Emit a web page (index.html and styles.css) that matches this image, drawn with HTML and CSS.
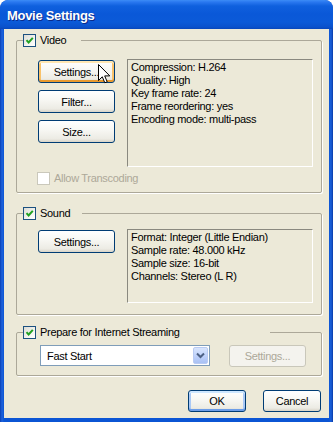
FILE: index.html
```html
<!DOCTYPE html>
<html>
<head>
<meta charset="utf-8">
<link rel="stylesheet" href="styles.css">
</head>
<body>
<div class="window">
  <div class="titlebar"><span class="title">Movie Settings</span></div>
  <div class="client">
    <fieldset class="group g-video">
      <legend class="glabel lg-video"><span class="chk"><svg viewBox="0 0 11 11" width="11" height="11"><path d="M2.5 5.2 L4.6 7.5 L8.8 2.8" fill="none" stroke="#21a121" stroke-width="2"/></svg></span>Video</legend>
      <div class="gbody b-video">
        <div class="row">
          <div class="btncol">
            <button class="btn wide hover">Settings...</button>
            <button class="btn wide">Filter...</button>
            <button class="btn wide">Size...</button>
          </div>
          <div class="info i-video">
            <div>Compression: H.264</div>
            <div>Quality: High</div>
            <div>Key frame rate: 24</div>
            <div>Frame reordering: yes</div>
            <div>Encoding mode: multi-pass</div>
          </div>
        </div>
        <div class="opt disabled"><span class="chk dis"></span>Allow Transcoding</div>
      </div>
    </fieldset>

    <fieldset class="group g-sound">
      <legend class="glabel lg-sound"><span class="chk"><svg viewBox="0 0 11 11" width="11" height="11"><path d="M2.5 5.2 L4.6 7.5 L8.8 2.8" fill="none" stroke="#21a121" stroke-width="2"/></svg></span>Sound</legend>
      <div class="gbody b-sound">
        <div class="row">
          <div class="btncol">
            <button class="btn wide">Settings...</button>
          </div>
          <div class="info i-sound">
            <div>Format: Integer (Little Endian)</div>
            <div>Sample rate: 48.000 kHz</div>
            <div>Sample size: 16-bit</div>
            <div>Channels: Stereo (L R)</div>
          </div>
        </div>
      </div>
    </fieldset>

    <fieldset class="group g-net">
      <legend class="glabel lg-net"><span class="chk"><svg viewBox="0 0 11 11" width="11" height="11"><path d="M2.5 5.2 L4.6 7.5 L8.8 2.8" fill="none" stroke="#21a121" stroke-width="2"/></svg></span>Prepare for Internet Streaming</legend>
      <div class="gbody b-net">
        <div class="combo">
          <span class="combo-text">Fast Start</span>
          <span class="combo-btn"><svg viewBox="0 0 9 7" width="9" height="7"><path d="M1 1.5 L4.5 5 L8 1.5" fill="none" stroke="#4d6185" stroke-width="2"/></svg></span>
        </div>
        <button class="btn wide disabled-btn">Settings...</button>
      </div>
    </fieldset>

    <div class="footer">
      <button class="btn small default">OK</button>
      <button class="btn small">Cancel</button>
    </div>
  </div>
  <svg class="cursor" viewBox="0 0 13 21" width="13" height="21"><path d="M0.5 0.5 L0.5 16.5 L4.3 12.8 L6.8 18.8 L9.2 17.8 L6.7 11.9 L11.8 11.9 Z" fill="#fff" stroke="#000" stroke-width="1" stroke-linejoin="miter"/></svg>
</div>
</body>
</html>
```
FILE: styles.css
```css
html, body {
  margin: 0;
  padding: 0;
  background: #ffffff;
}
.window {
  position: relative;
  width: 333px;
  height: 422px;
  box-sizing: border-box;
  border-radius: 8px 8px 0 0;
  background: linear-gradient(90deg, #0a3fb4 0, #1e63dc 2px, #0b55d4 4px, #0b55d4 329px, #1b5fd8 331px, #083aa8 333px);
  display: flex;
  flex-direction: column;
  font-family: "Liberation Sans", Arial, sans-serif;
  font-size: 11px;
  letter-spacing: -0.3px;
  color: #000;
  overflow: hidden;
}
.titlebar {
  height: 29px;
  flex: none;
  box-sizing: border-box;
  padding: 8px 0 0 7px;
  border-radius: 8px 8px 0 0;
  background: linear-gradient(180deg, #3c8cf6 0, #2a78f0 2px, #0f60de 6px, #0a58d8 14px, #0b5ad8 22px, #0a52cc 27px, #0847ba 29px);
}
.title {
  display: block;
  font-family: "Liberation Sans", Arial, sans-serif;
  font-weight: bold;
  font-size: 13px;
  line-height: 16px;
  letter-spacing: -0.3px;
  color: #ffffff;
  text-shadow: 1px 1px 0 #0a2a8a;
}
.client {
  flex: 1;
  margin: 0 4px 4px 4px;
  background: #ece9d8;
  display: flex;
  flex-direction: column;
}
.group {
  margin: 0 7px 0 12px;
  padding: 0;
  border: 1px solid #aca899;
  border-radius: 2px;
  box-shadow: 1px 1px 0 #ffffff;
  min-width: 0;
}
.g-video { margin-top: 5px; }
.g-sound { margin-top: 14px; }
.g-net { margin-top: 11px; }
.glabel {
  display: flex;
  align-items: center;
  margin-left: 6px;
  padding: 0;
  height: 13px;
  line-height: 13px;
  background: #ece9d8;
}
.lg-video { padding-right: 15px; }
.lg-sound { padding-right: 12px; }
.lg-net { padding-right: 90px; }
.chk {
  width: 13px;
  height: 13px;
  box-sizing: border-box;
  border: 1px solid #1c5180;
  background: linear-gradient(135deg, #dcdcd5 0%, #f4f4f0 60%, #ffffff 100%);
  margin-right: 4px;
  display: inline-flex;
  align-items: center;
  justify-content: center;
  flex: none;
}
.chk.dis {
  border-color: #cac8bb;
  background: #ffffff;
}
.gbody { padding-left: 21px; }
.b-video { padding-top: 12px; padding-bottom: 7px; }
.b-sound { padding-top: 9px; padding-bottom: 11px; }
.b-net {
  padding-top: 6px;
  padding-bottom: 8px;
  padding-left: 23px;
  display: flex;
  gap: 19px;
}
.row {
  display: flex;
  gap: 12px;
}
.btncol {
  display: flex;
  flex-direction: column;
  gap: 7px;
  padding-top: 1px;
}
.btn {
  box-sizing: border-box;
  height: 23px;
  margin: 0;
  padding: 0;
  border: 1px solid #003c74;
  border-radius: 3px;
  background: linear-gradient(180deg, #ffffff 0%, #f8f8f4 40%, #ecebe4 85%, #d8d3c6 100%);
  font-family: "Liberation Sans", Arial, sans-serif;
  font-size: 11px;
  letter-spacing: -0.3px;
  color: #000;
  text-align: center;
}
.btn.wide { width: 77px; }
.btn.small { width: 58px; height: 22px; }
.btn.hover {
  box-shadow: inset 0 2px 0 #ffe7b3, inset 0 -2px 0 #e99a2f, inset 2px 0 0 #f9c26a, inset -2px 0 0 #f9c26a;
}
.btn.default {
  box-shadow: inset 0 2px 0 #cee7ff, inset 0 -2px 0 #6c9de8, inset 2px 0 0 #aac9f6, inset -2px 0 0 #aac9f6;
}
.btn.disabled-btn {
  height: 22px;
  border-color: #c9c7ba;
  background: #f4f3ee;
  color: #aca899;
}
.info {
  box-sizing: border-box;
  width: 186px;
  border: 1px solid;
  border-color: #8a897f #ffffff #ffffff #8a897f;
  padding: 1px 3px;
  line-height: 13px;
  white-space: nowrap;
}
.i-video { height: 108px; }
.i-sound { height: 74px; }
.opt {
  display: flex;
  align-items: center;
  margin-top: 5px;
  margin-left: -1px;
  height: 13px;
  line-height: 13px;
}
.opt.disabled { color: #aca899; }
.combo {
  box-sizing: border-box;
  width: 170px;
  height: 21px;
  border: 1px solid #7f9db9;
  background: #ffffff;
  display: flex;
  align-items: center;
  justify-content: space-between;
  padding: 1px;
}
.combo-text { padding-left: 5px; }
.combo-btn {
  width: 15px;
  height: 17px;
  box-sizing: border-box;
  border: 1px solid #b9cbf3;
  border-radius: 2px;
  background: linear-gradient(180deg, #d8e5fd 0%, #c1d3fb 50%, #a9c1f4 100%);
  display: flex;
  align-items: center;
  justify-content: center;
}
.footer {
  display: flex;
  justify-content: flex-end;
  gap: 17px;
  margin-top: 14px;
  padding-right: 8px;
}
.cursor {
  position: absolute;
  left: 98px;
  top: 64px;
}
```
